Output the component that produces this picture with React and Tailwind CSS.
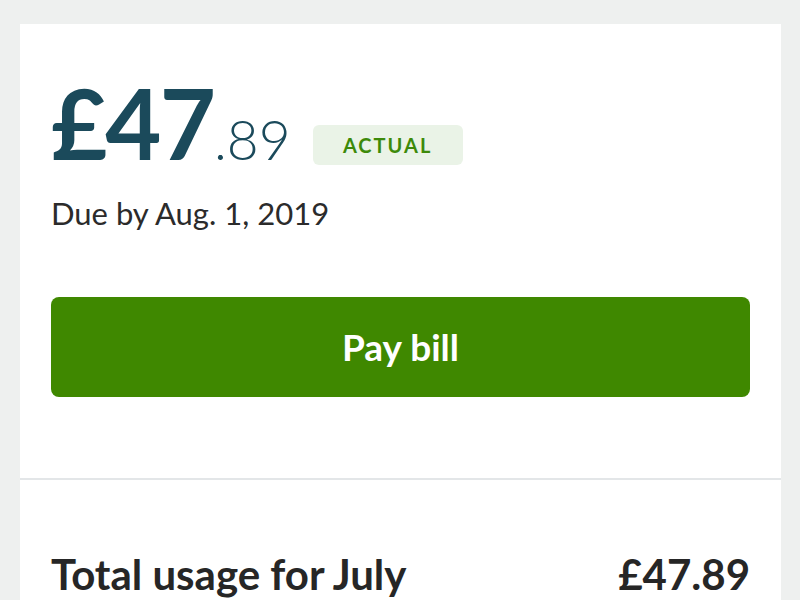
export default function App() {
  return (
    <div className="min-h-screen bg-[#eef0ef] px-5 pt-6 font-['Lato','Noto_Sans',sans-serif]">
      <div className="w-[761px] bg-white">
        {/* Bill summary */}
        <div className="px-[31px] pt-[50px] pb-[81px]">
          <div className="flex items-end gap-[22px]">
            <div className="leading-none text-[#1b4a5b]">
              <span className="text-[97px] font-bold tracking-[-0.02em]">£47</span>
              <span className="text-[55px] font-light">.89</span>
            </div>
            <span className="mb-[6px] flex h-10 w-[150px] items-center justify-center rounded-md bg-[#eaf3e7] text-[20px] font-bold tracking-[0.1em] text-[#3d8a0a]">
              ACTUAL
            </span>
          </div>
          <p className="mt-[27px] text-[31px] leading-none text-[#2b2b2b]">
            Due by Aug. 1, 2019
          </p>
          <button className="mt-[68px] flex h-[100px] w-full items-center justify-center rounded-lg bg-[#3f8800] text-[37px] font-bold text-white">
            Pay bill
          </button>
        </div>

        {/* Usage */}
        <div className="border-t-2 border-[#e3e6e8] px-[31px] pt-[73px] pb-10">
          <div className="flex items-center justify-between text-[42px] font-bold leading-none text-[#262626]">
            <span>Total usage for July</span>
            <span>£47.89</span>
          </div>
        </div>
      </div>
    </div>
  );
}
